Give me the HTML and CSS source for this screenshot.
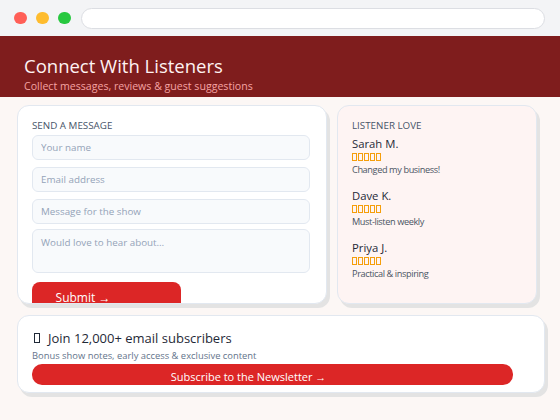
FILE: index.html
```html
<!DOCTYPE html>
<html>
<head>
<meta charset="utf-8">
<link rel="stylesheet" href="styles.css">
</head>
<body>
<div class="chrome">
  <span class="dot red"></span>
  <span class="dot yellow"></span>
  <span class="dot green"></span>
  <div class="url"></div>
</div>
<header class="hero">
  <h1 class="hero-title">Connect With Listeners</h1>
  <p class="hero-sub">Collect messages, reviews &amp; guest suggestions</p>
</header>
<main class="content">
  <div class="row">
    <section class="card form-card">
      <div class="label">SEND A MESSAGE</div>
      <input class="field" type="text" placeholder="Your name">
      <input class="field" type="text" placeholder="Email address">
      <input class="field" type="text" placeholder="Message for the show">
      <textarea class="field area" placeholder="Would love to hear about…"></textarea>
      <button class="btn submit">Submit →</button>
    </section>
    <section class="card love-card">
      <div class="label">LISTENER LOVE</div>
      <div class="review">
        <div class="name">Sarah M.</div>
        <div class="stars" aria-label="5 stars"><i class="box"></i><i class="box"></i><i class="box"></i><i class="box"></i><i class="box"></i></div>
        <div class="quote">Changed my business!</div>
      </div>
      <div class="review">
        <div class="name">Dave K.</div>
        <div class="stars" aria-label="5 stars"><i class="box"></i><i class="box"></i><i class="box"></i><i class="box"></i><i class="box"></i></div>
        <div class="quote">Must-listen weekly</div>
      </div>
      <div class="review">
        <div class="name">Priya J.</div>
        <div class="stars" aria-label="5 stars"><i class="box"></i><i class="box"></i><i class="box"></i><i class="box"></i><i class="box"></i></div>
        <div class="quote">Practical &amp; inspiring</div>
      </div>
    </section>
  </div>
  <section class="card news-card">
    <div class="news-title"><i class="mail-box"></i>Join 12,000+ email subscribers</div>
    <div class="news-sub">Bonus show notes, early access &amp; exclusive content</div>
    <button class="btn subscribe">Subscribe to the Newsletter →</button>
  </section>
</main>
</body>
</html>
```

FILE: styles.css
```css
* { box-sizing: border-box; }
html, body { margin: 0; padding: 0; }
body {
  width: 560px;
  height: 420px;
  overflow: hidden;
  background: #fcf7f5;
  font-family: "Open Sans", "Noto Sans", sans-serif;
}
.chrome {
  height: 36px;
  background: #f3f4f6;
  display: flex;
  align-items: center;
  padding: 0 15px 0 14px;
  gap: 9.5px;
}
.dot {
  width: 12.5px;
  height: 12.5px;
  border-radius: 50%;
  flex: none;
}
.dot.red { background: #ff5f57; }
.dot.yellow { background: #febc2e; }
.dot.green { background: #28c840; }
.url {
  flex: 1;
  height: 21px;
  margin-left: 1px;
  background: #fff;
  border: 1px solid #dcdee3;
  border-radius: 11px;
}
.hero {
  height: 61px;
  background: #7f1d1d;
  padding: 19px 24px 0;
}
.hero-title {
  margin: 0;
  font-size: 18.5px;
  line-height: 22px;
  font-weight: 400;
  color: #fef2f2;
}
.hero-sub {
  margin: 1.5px 0 0;
  font-size: 10.6px;
  line-height: 14px;
  color: #f5a3a3;
}
.content {
  padding: 7.5px 15px 0 17px;
}
.row {
  display: grid;
  grid-template-columns: 310px 200px;
  gap: 10px;
}
.card {
  border: 1px solid #e2e8f0;
  border-radius: 12px;
  box-shadow: 3px 4px 0 #e3e3e3;
  overflow: hidden;
}
.form-card {
  height: 199px;
  background: #fff;
  padding: 13px 16px 0 14px;
  display: flex;
  flex-direction: column;
}
.love-card {
  height: 199px;
  background: #fef4f3;
  padding: 13px 14px 0 14px;
}
.label {
  font-size: 9.8px;
  line-height: 14px;
  color: #475569;
}
.field {
  display: block;
  width: 100%;
  height: 25px;
  margin: 0;
  padding: 0 8px;
  background: #f8fafc;
  border: 1px solid #e2e8f0;
  border-radius: 6px;
  font-family: "Open Sans", "Noto Sans", sans-serif;
  font-size: 9.8px;
  color: #334155;
  outline: none;
  flex: none;
}
.field::placeholder { color: #94a3b8; }
.form-card .label { margin-bottom: 2px; }
.form-card .field + .field { margin-top: 7px; }
.form-card .field.area {
  margin-top: 5px;
  height: 44px;
  padding: 6px 8px;
  resize: none;
  line-height: 14px;
}
.btn {
  display: block;
  border: none;
  background: #dc2626;
  color: #fff;
  font-family: "Open Sans", "Noto Sans", sans-serif;
  text-align: center;
  cursor: pointer;
  margin: 0;
}
.submit {
  margin-top: 9px;
  width: 149px;
  height: 28px;
  flex: none;
  padding: 4px 47px 0 0;
  border-radius: 8px;
  font-size: 12px;
  line-height: 14px;
}
.love-card .label { margin-bottom: 3.7px; }
.review + .review { margin-top: 10.7px; }
.name {
  font-size: 11.3px;
  line-height: 16px;
  color: #1f2937;
}
.stars {
  display: flex;
  gap: 1px;
  height: 11px;
  padding-top: 1px;
}
.box {
  display: block;
  width: 5px;
  height: 8px;
  border: 1px solid #f59e0b;
}
.quote {
  font-size: 9.2px;
  line-height: 14px;
  letter-spacing: -0.4px;
  color: #4b5563;
}
.news-card {
  margin-top: 11px;
  height: 78.5px;
  background: #fff;
  padding: 13px 31px 0 14px;
}
.news-title {
  font-size: 13px;
  line-height: 18px;
  color: #1f2937;
  display: flex;
  align-items: center;
}
.mail-box {
  display: block;
  width: 6px;
  height: 10px;
  border: 1px solid #1f2937;
  margin: 0 8px 0 2px;
}
.news-sub {
  margin-top: 2px;
  font-size: 9.4px;
  line-height: 13px;
  color: #64748b;
}
.subscribe {
  margin-top: 2.7px;
  width: 100%;
  height: 21px;
  padding: 5px 48px 0 0;
  border-radius: 10px;
  font-size: 11px;
  line-height: 14px;
}
```
